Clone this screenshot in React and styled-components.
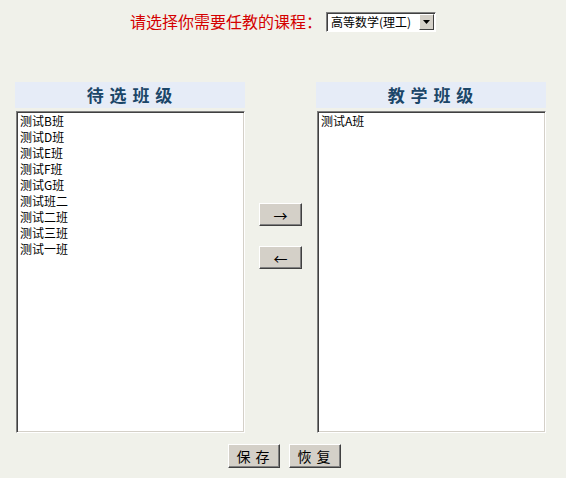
import styled, { createGlobalStyle } from "styled-components";

const GlobalStyle = createGlobalStyle`
  body {
    margin: 0;
    background: #f0f1ea;
    font-family: "Noto Sans CJK SC", "Liberation Sans", sans-serif;
  }
`;

const pending = ["测试B班", "测试D班", "测试E班", "测试F班", "测试G班", "测试班二", "测试二班", "测试三班", "测试一班"];
const teaching = ["测试A班"];

export default function App() {
  return (
    <>
      <GlobalStyle />
      <Page>
        <TitleRow>
          <Title>请选择你需要任教的课程：</Title>
          <Select>
            <SelectText>高等数学(理工)</SelectText>
            <SelectArrow>
              <svg width="7" height="4" viewBox="0 0 7 4">
                <path d="M0 0h7L3.5 4z" fill="#000" />
              </svg>
            </SelectArrow>
          </Select>
        </TitleRow>
        <Columns>
          <Column>
            <Header>待 选 班 级</Header>
            <ListBox>
              {pending.map((c) => (
                <Item key={c}>{c}</Item>
              ))}
            </ListBox>
          </Column>
          <Middle>
            <ArrowButton>→</ArrowButton>
            <ArrowButton>←</ArrowButton>
          </Middle>
          <Column>
            <Header>教 学 班 级</Header>
            <ListBox>
              {teaching.map((c) => (
                <Item key={c}>{c}</Item>
              ))}
            </ListBox>
          </Column>
        </Columns>
        <Footer>
          <ActionButton>保 存</ActionButton>
          <ActionButton>恢 复</ActionButton>
        </Footer>
      </Page>
    </>
  );
}

const Page = styled.div`
  width: 566px;
  height: 478px;
  display: flex;
  flex-direction: column;
`;

const TitleRow = styled.div`
  display: flex;
  justify-content: center;
  align-items: center;
  gap: 4px;
  margin-top: 11px;
  height: 21px;
`;

const Title = styled.span`
  color: #d40000;
  font-size: 16px;
  line-height: 21px;
`;

const Select = styled.div`
  display: flex;
  align-items: stretch;
  width: 110px;
  height: 20px;
  box-sizing: border-box;
  background: #fff;
  border: 1px solid #808080;
  border-right-color: #fff;
  border-bottom-color: #fff;
  box-shadow: inset 1px 1px 0 #404040;
`;

const SelectText = styled.span`
  flex: 1;
  font-size: 12px;
  line-height: 18px;
  padding-left: 4px;
  color: #000;
  white-space: nowrap;
`;

const SelectArrow = styled.span`
  width: 15px;
  margin: 1px 1px 1px 0;
  display: flex;
  align-items: center;
  justify-content: center;
  background: #d4d0c8;
  border: 1px solid;
  border-color: #fff #404040 #404040 #fff;
  box-sizing: border-box;
`;

const Columns = styled.div`
  display: flex;
  margin: 50px 0 0 15px;
`;

const Column = styled.div`
  width: 230px;
  display: flex;
  flex-direction: column;
`;

const Header = styled.div`
  height: 26px;
  background: #e6ecf7;
  color: #1b4668;
  font-weight: bold;
  font-size: 17px;
  line-height: 26px;
  text-align: center;
  letter-spacing: 1px;
  white-space: pre;
  margin-bottom: 3px;
`;

const ListBox = styled.div`
  height: 322px;
  margin-left: 1px;
  box-sizing: border-box;
  background: #fff;
  border: 1px solid;
  border-color: #808080 #fff #fff #808080;
  box-shadow: inset 1px 1px 0 #404040, inset -1px -1px 0 #d4d0c8;
  padding: 1px 0 0 3px;
`;

const Item = styled.div`
  font-size: 12px;
  line-height: 16px;
  color: #000;
`;

const Middle = styled.div`
  width: 71px;
  display: flex;
  flex-direction: column;
  align-items: center;
  padding-top: 121px;
  gap: 20px;
`;

const ArrowButton = styled.button`
  width: 43px;
  height: 23px;
  padding: 0;
  background: #d4d0c8;
  border: 1px solid;
  border-color: #fff #404040 #404040 #fff;
  box-shadow: inset -1px -1px 0 #808080;
  font-family: "Noto Sans CJK SC", sans-serif;
  font-size: 14px;
  line-height: 18px;
  color: #000;
`;

const Footer = styled.div`
  display: flex;
  justify-content: center;
  gap: 9px;
  margin-top: 11px;
  padding-left: 2px;
`;

const ActionButton = styled.button`
  width: 52px;
  height: 24px;
  padding: 0;
  background: #d4d0c8;
  border: 1px solid;
  border-color: #fff #404040 #404040 #fff;
  box-shadow: inset -1px -1px 0 #808080;
  font-family: "Noto Sans CJK SC", sans-serif;
  font-size: 14px;
  line-height: 18px;
  letter-spacing: 1px;
  color: #000;
`;
